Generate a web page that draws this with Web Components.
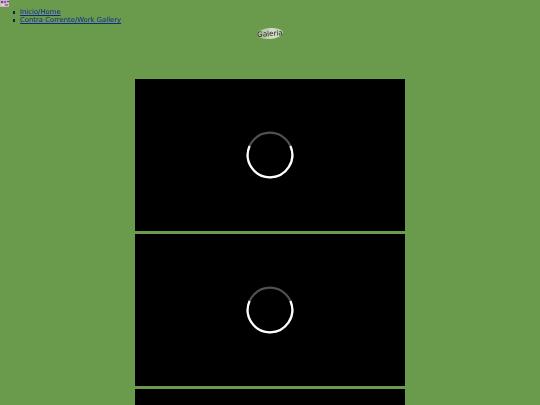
<!DOCTYPE html>
<html>
<head>
<meta charset="utf-8">
<title>Galeria</title>
<style>
html, body { margin: 0; padding: 0; height: 100%; overflow: hidden; }
body { background: #6a9a4b; font-family: "DejaVu Sans", sans-serif; }
</style>
</head>
<body>
<site-nav>
	<a href="#">Inicio/Home</a>
	<a href="#">Contra Corrente/Work Gallery</a>
</site-nav>
<gallery-title>Galeria</gallery-title>
<gallery-list>
	<video-panel></video-panel>
	<video-panel></video-panel>
	<video-panel></video-panel>
</gallery-list>

<template id="site-nav-tpl">
<style>
:host { display: block; height: 28px; font-size: 6.85px; line-height: 8px; filter: blur(.3px); }
svg { display: block; width: 9px; height: 7px; }
ul { margin: 0; padding: 0; list-style: none; }
::slotted(a) {
	display: block; width: max-content; margin-left: 12px; padding-left: 8px;
	position: relative; top: 1px;
	color: #0f2a96; text-decoration: underline;
	background: radial-gradient(circle 1.3px at 2px 4.5px, #14213d 90%, transparent) no-repeat;
}
</style>
<svg viewBox="0 0 9 7">
	<rect width="9" height="7" fill="#c9b3cf"/>
	<rect x="1" y="1" width="2" height="2" fill="#6d3f86"/>
	<rect x="4" y="1" width="2" height="2" fill="#8a5a9c"/>
	<rect x="7" y="1" width="2" height="1" fill="#5a3570"/>
	<rect x="1" y="4" width="3" height="2" fill="#e6d99a"/>
	<rect x="5" y="4" width="3" height="2" fill="#a878b4"/>
</svg>
<ul><slot></slot></ul>
</template>

<template id="gallery-title-tpl">
<style>
:host { display: flex; justify-content: center; height: 51px; filter: blur(.3px); }
span {
	box-sizing: border-box; width: 26px; height: 11px;
	display: flex; align-items: center; justify-content: center;
	border-radius: 50%; background: linear-gradient(to right, #9fb38c, #d3dec6 60%, #b9c9a8);
	color: #1e1e1e; font-size: 7.2px; line-height: 11px;
	transform: rotate(-4deg); white-space: nowrap;
}
</style>
<span><slot></slot></span>
</template>

<template id="gallery-list-tpl">
<style>
:host { display: flex; flex-direction: column; align-items: center; gap: 3px; }
</style>
<slot></slot>
</template>

<template id="video-panel-tpl">
<style>
:host { display: flex; align-items: center; justify-content: center; flex: none; width: 270px; height: 152px; background: #000; }
svg { display: block; width: 48px; height: 48px; }
circle, path { fill: none; stroke-width: 2.2; }
</style>
<svg viewBox="0 0 48 48">
	<circle cx="24" cy="24" r="22.3" stroke="#505050"/>
	<path d="M3.6 15A22.3 22.3 0 1 0 44.4 15" stroke="#fff"/>
</svg>
</template>

<script>
class TemplatedElement extends HTMLElement {
	constructor(id) {
		super();
		let tmpl = document.querySelector(id);
		this.attachShadow({mode: 'open'}).appendChild(tmpl.content.cloneNode(true));
	}
}
class SiteNav extends TemplatedElement { constructor() { super('#site-nav-tpl'); } }
class GalleryTitle extends TemplatedElement { constructor() { super('#gallery-title-tpl'); } }
class GalleryList extends TemplatedElement { constructor() { super('#gallery-list-tpl'); } }
class VideoPanel extends TemplatedElement { constructor() { super('#video-panel-tpl'); } }
customElements.define('site-nav', SiteNav);
customElements.define('gallery-title', GalleryTitle);
customElements.define('gallery-list', GalleryList);
customElements.define('video-panel', VideoPanel);
</script>
</body>
</html>
